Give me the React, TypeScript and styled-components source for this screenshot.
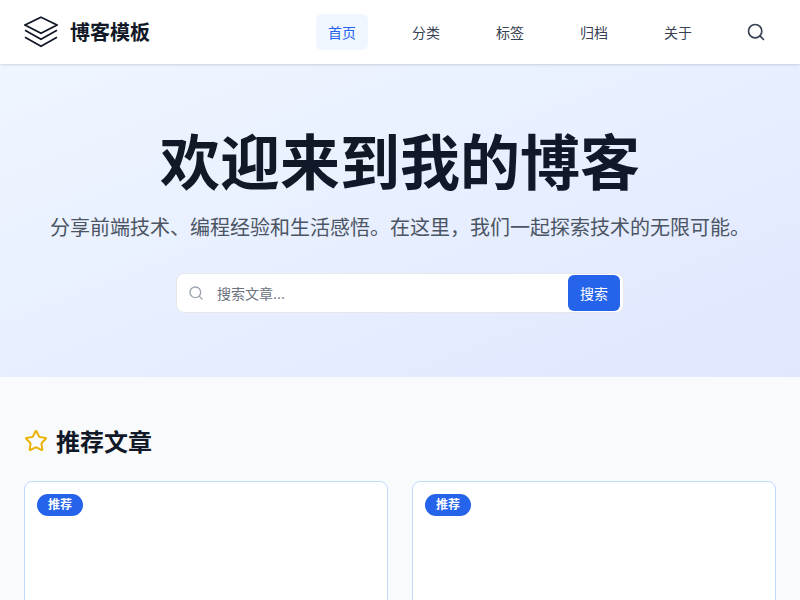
import styled, { createGlobalStyle } from 'styled-components';
import { Search, Star } from 'lucide-react';

const GlobalStyle = createGlobalStyle`
  * {
    box-sizing: border-box;
  }

  html,
  body {
    margin: 0;
    height: 600px;
    overflow: hidden;
    background: #f9fafb;
    font-family: Inter, 'Noto Sans CJK SC', sans-serif;
  }
`;

const Header = styled.header`
  position: relative;
  z-index: 2;
  display: flex;
  align-items: center;
  justify-content: space-between;
  height: 64px;
  padding: 0 24px;
  background: #fff;
  box-shadow: 0 1px 3px rgba(0, 0, 0, 0.1), 0 1px 2px -1px rgba(0, 0, 0, 0.1);
`;

const Logo = styled.a`
  display: flex;
  align-items: center;
  gap: 12px;
`;

const LogoText = styled.span`
  padding-top: 2px;
  font-size: 20px;
  font-weight: 700;
  line-height: 28px;
  color: #111827;
`;

const Nav = styled.nav`
  display: flex;
  align-items: center;
  gap: 32px;
`;

const NavItem = styled.a<{ $active?: boolean }>`
  display: flex;
  align-items: center;
  justify-content: center;
  width: 52px;
  height: 36px;
  padding-top: 2px;
  border-radius: 6px;
  font-size: 14px;
  line-height: 20px;
  color: ${(p) => (p.$active ? '#2563eb' : '#374151')};
  background: ${(p) => (p.$active ? '#eff6ff' : 'transparent')};
`;

const SearchButton = styled.button`
  display: flex;
  align-items: center;
  justify-content: center;
  width: 40px;
  height: 40px;
  padding: 0;
  border: 0;
  background: none;
  color: #374151;
`;

const Hero = styled.section`
  display: flex;
  flex-direction: column;
  align-items: center;
  height: 313px;
  padding-top: 64px;
  background: linear-gradient(to bottom right, #eff6ff 0%, #e0e7ff 100%);
`;

const HeroTitle = styled.h1`
  margin: 0;
  font-size: 60px;
  font-weight: 700;
  line-height: 70px;
  color: #111827;
`;

const HeroText = styled.p`
  margin: 16px 0 0;
  font-size: 20px;
  line-height: 28px;
  color: #4b5563;
`;

const SearchBar = styled.div`
  display: flex;
  align-items: center;
  width: 448px;
  height: 40px;
  margin-top: 31px;
  padding: 0 3px 0 11px;
  border: 1px solid #e5e7eb;
  border-radius: 8px;
  background: #fff;
  color: #9ca3af;
`;

const SearchInput = styled.input`
  flex: 1;
  min-width: 0;
  margin-left: 13px;
  border: 0;
  outline: 0;
  padding: 0;
  background: none;
  font-family: inherit;
  font-size: 14px;
  color: #111827;

  &::placeholder {
    color: #6b7280;
    opacity: 1;
  }
`;

const SubmitButton = styled.button`
  width: 52px;
  height: 36px;
  padding: 0;
  border: 0;
  border-radius: 6px;
  background: #2563eb;
  color: #fff;
  font-family: inherit;
  font-size: 14px;
`;

const Main = styled.main`
  padding: 48px 24px 0;
`;

const SectionTitle = styled.h2`
  display: flex;
  align-items: flex-start;
  gap: 8px;
  margin: 0 0 20px;
  font-size: 24px;
  font-weight: 700;
  line-height: 36px;
  color: #111827;

  > svg {
    margin-top: 4px;
  }
`;

const CardGrid = styled.div`
  display: grid;
  grid-template-columns: 1fr 1fr;
  gap: 24px;
`;

const Card = styled.article`
  height: 300px;
  padding: 12px;
  border: 1px solid #bfdbfe;
  border-radius: 8px;
  background: #fff;
`;

const Badge = styled.span`
  display: block;
  width: fit-content;
  padding: 2px 11px;
  border-radius: 9999px;
  background: #2563eb;
  color: #fff;
  font-size: 12px;
  font-weight: 700;
  line-height: 18px;
`;

const App = () => {
  return (
    <>
      <GlobalStyle />
      <Header>
        <Logo>
          <svg width="34" height="32" viewBox="0 0 34 32" fill="none" stroke="#111827" strokeWidth="1.7">
            <path d="M17 1.2 L33 9 L17 17.2 L1 9 Z" />
            <path d="M1 14.2 L17 23.2 L33 14.2" />
            <path d="M1 21.2 L17 30.2 L33 21.2" />
          </svg>
          <LogoText>博客模板</LogoText>
        </Logo>
        <Nav>
          <NavItem $active>首页</NavItem>
          <NavItem>分类</NavItem>
          <NavItem>标签</NavItem>
          <NavItem>归档</NavItem>
          <NavItem>关于</NavItem>
          <SearchButton aria-label="搜索">
            <Search size={20} />
          </SearchButton>
        </Nav>
      </Header>

      <Hero>
        <HeroTitle>欢迎来到我的博客</HeroTitle>
        <HeroText>分享前端技术、编程经验和生活感悟。在这里，我们一起探索技术的无限可能。</HeroText>
        <SearchBar>
          <Search size={16} />
          <SearchInput placeholder="搜索文章..." />
          <SubmitButton>搜索</SubmitButton>
        </SearchBar>
      </Hero>

      <Main>
        <SectionTitle>
          <Star size={24} color="#eab308" />
          推荐文章
        </SectionTitle>
        <CardGrid>
          <Card>
            <Badge>推荐</Badge>
          </Card>
          <Card>
            <Badge>推荐</Badge>
          </Card>
        </CardGrid>
      </Main>
    </>
  );
};

export default App;
